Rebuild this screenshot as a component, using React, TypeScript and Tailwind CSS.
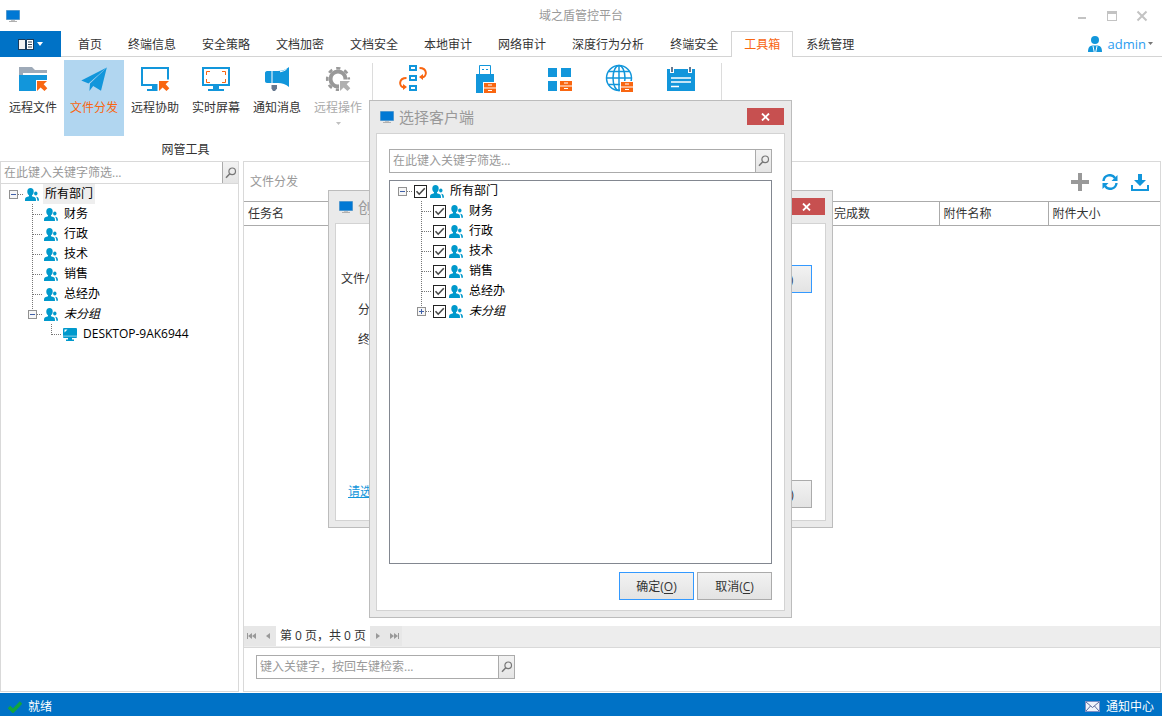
import React, { useState } from 'react';

const TABS = ['首页', '终端信息', '安全策略', '文档加密', '文档安全', '本地审计', '网络审计', '深度行为分析', '终端安全', '工具箱', '系统管理'];
const DEPARTMENTS = ['财务', '行政', '技术', '销售', '总经办'];

const BLUE = '#1296db';
const ORANGE = '#f96611';

/* ---------- icons ---------- */

const MonitorIcon = () => (
  <svg width="14" height="12" viewBox="0 0 14 12" className="shrink-0">
    <rect x="0" y="0" width="14" height="10" fill="#9fb9cc" />
    <rect x="0.5" y="0.5" width="13" height="9" fill="#0078d4" />
    <rect x="5" y="10" width="4" height="1" fill="#c4c4c4" />
    <rect x="3" y="11" width="8" height="1" fill="#b0b0b0" />
  </svg>
);

const GroupIcon = () => (
  <svg width="14" height="13" viewBox="0 0 14 13" className="shrink-0" fill="#0099cc">
    <ellipse cx="5.500" cy="3.700" rx="3.200" ry="3.700" />
    <path d="M4 6.500h3v1.700L9.800 9.200C10.900 9.700 11 10.500 11 13H0C0 10.500.1 9.700 1.200 9.200L4 8.200z" />
    <ellipse cx="10.800" cy="5.500" rx="1.700" ry="2" />
    <path d="M11 8.800C13.200 9 14 10 14 12.700H12.300C12.300 11 12 9.700 11 8.800z" />
  </svg>
);

const ComputerIcon = () => (
  <svg width="14" height="13" viewBox="0 0 14 13" className="shrink-0">
    <rect width="14" height="10" rx="1" fill="#0099cc" />
    <path d="M1.5 4.5V1.5H4.5z" fill="#fff" />
    <rect x="0" y="7.6" width="14" height="1" fill="#8fd0e8" />
    <path d="M5 10h4v1.5h2V13H3v-1.5h2z" fill="#0099cc" />
  </svg>
);

const SearchIcon = () => (
  <svg width="12" height="12" viewBox="0 0 12 12" fill="none" stroke="#777">
    <circle cx="7.2" cy="4.3" r="3.3" strokeWidth="1.2" />
    <path d="M4.8 6.8L1 10.8" strokeWidth="1.5" />
  </svg>
);

const CloseGlyph = () => (
  <svg width="9" height="8" viewBox="0 0 9 8" stroke="#fff" strokeWidth="1.8">
    <path d="M1 .5l7 7M8 .5l-7 7" />
  </svg>
);

const RibbonSvg = ({ children }: { children: React.ReactNode }) => (
  <svg width="32" height="32" viewBox="0 0 32 32" fill="none" className="shrink-0">
    {children}
  </svg>
);

const CornerArrow = ({ fill }: { fill: string }) => (
  <path d="M20 17h10l-3.3 3.3 3.6 3.9-2.8 2.8-3.9-3.6L20 27z" fill={fill} />
);

const Drawer = ({ x, y }: { x: number; y: number }) => (
  <g>
    <rect x={x - 1} y={y - 1} width="14" height="12" fill="#fff" />
    <rect x={x} y={y} width="12" height="4.5" fill={ORANGE} />
    <rect x={x} y={y + 5.5} width="12" height="4.5" fill={ORANGE} />
    <path d={`M${x + 4} ${y + 2}h4M${x + 4} ${y + 7.5}h4`} stroke="#fff" />
  </g>
);

const RemoteFileIcon = () => (
  <RibbonSvg>
    <path d="M2 3h13l3 3h12v4H6v1H2z" fill="#9eaab8" />
    <path d="M6 9h24v2H6z" fill="#fff" />
    <rect x="2" y="11" width="28" height="16" fill={BLUE} />
    <path d="M19 16h12v12H19z" fill="#fff" />
    <CornerArrow fill={ORANGE} />
  </RibbonSvg>
);

const PlaneIcon = () => (
  <RibbonSvg>
    <path d="M28.8 3.5L3.3 16.5l7.2 3z" fill={BLUE} />
    <path d="M28.8 3.5L12 19.6l-.6 7.4 3.8-5 7.8 4.8z" fill={BLUE} />
  </RibbonSvg>
);

const RemoteAssistIcon = () => (
  <RibbonSvg>
    <rect x="3" y="4" width="26" height="17" stroke={BLUE} strokeWidth="2" />
    <path d="M13 22h6v5H8v-2h5z" fill={BLUE} />
    <path d="M18.500 15.500H32V28H18.500z" fill="#fff" />
    <CornerArrow fill={ORANGE} />
  </RibbonSvg>
);

const ScreenIcon = () => (
  <RibbonSvg>
    <rect x="3" y="4" width="26" height="17" stroke={BLUE} strokeWidth="2" />
    <path d="M13 22h6v3h5v2H8v-2h5z" fill={BLUE} />
    <path d="M10 7.500H6.500V11M22 7.500h3.500V11M10 18.500H6.500V15M22 18.500h3.500V15" stroke={ORANGE} />
  </RibbonSvg>
);

const MegaphoneIcon = () => (
  <RibbonSvg>
    <path d="M6 7h4.500v12H6c-1.200 0-2-1-2-2V9c0-1 .8-2 2-2z" fill={BLUE} />
    <path d="M11.500 7H17c4 0 8-1.500 11-4v20c-3-2.500-7-4-11-4h-5.500z" fill={BLUE} />
    <path d="M19 7.800c2.500-.4 4.500-1.200 6.500-2.500" stroke="#fff" />
    <path d="M10.500 21H16v3.500L14 27h-2l-1.500-2.500z" fill="#66788f" />
  </RibbonSvg>
);

const GearIcon = () => (
  <RibbonSvg>
    <circle cx="16" cy="15" r="7.5" stroke="#999" strokeWidth="4" />
    <circle cx="16" cy="15" r="10.8" stroke="#999" strokeWidth="2.600" strokeDasharray="4.240 4.240" strokeDashoffset="2.120" />
    <path d="M17 15.500h14V28H17z" fill="#fff" />
    <path d="M18 17h10l-3.300 3.300 3.600 3.900-2.800 2.800-3.900-3.600L18 27z" fill="#b0b0b0" />
  </RibbonSvg>
);

const FlowIcon = () => (
  <RibbonSvg>
    <path d="M13 2h6v4h-6zM13 12h6v4h-6zM13 22h6v4h-6z" stroke={BLUE} strokeWidth="2" />
    <path d="M22.500 4c8 0 8 8.500 2.500 9.500M9.500 14c-8 0-8 8.500-2.500 9.500" stroke={ORANGE} strokeWidth="2" />
    <path d="M22 13l4-3v6zM10 23l-4-3v6z" fill={ORANGE} />
  </RibbonSvg>
);

const UsbIcon = () => (
  <RibbonSvg>
    <path d="M8.500 10V1.500h11V10" stroke={BLUE} />
    <path d="M11 5.500h2M15 5.500h2" stroke={BLUE} />
    <rect x="5" y="10" width="18" height="19" fill={BLUE} />
    <Drawer x={13} y={19} />
  </RibbonSvg>
);

const AppsIcon = () => (
  <RibbonSvg>
    <path d="M4 4h9v9H4zM17 4h10v9H17zM4 17h9v10H4z" fill={BLUE} />
    <Drawer x={16} y={17} />
  </RibbonSvg>
);

const GlobeIcon = () => (
  <RibbonSvg>
    <g stroke={BLUE} strokeWidth="1.500">
      <circle cx="14" cy="14" r="12.500" />
      <ellipse cx="14" cy="14" rx="6" ry="12.500" />
      <path d="M14 1.500v25M1.500 14h25M3.500 7.500h21M3.500 20.500h21" />
    </g>
    <Drawer x={16} y={18} />
  </RibbonSvg>
);

const NoteIcon = () => (
  <RibbonSvg>
    <rect x="1" y="5" width="28" height="22" fill={BLUE} />
    <path d="M4 3h4v6H4zM22 3h4v6h-4z" fill="#fff" />
    <path d="M5 3h2v5H5zM23 3h2v5h-2z" fill="#66788f" />
    <path d="M5 14h20M5 18h20M5 22.500h8" stroke="#fff" strokeWidth="1.600" />
  </RibbonSvg>
);

/* ---------- shared pieces ---------- */

const SearchBox = ({ label, className }: { label: string; className: string }) => (
  <div className={`flex items-stretch ${className}`}>
    <input
      type="text"
      aria-label={label}
      placeholder={label}
      className="min-w-0 flex-1 bg-white px-[3px] text-xs text-[#333] outline-none placeholder:text-[#999]"
    />
    <button aria-label="搜索" className="flex w-4 items-center justify-center border-l border-[#ababab] bg-linear-to-b from-[#f2f2f2] to-[#e5e5e5]">
      <SearchIcon />
    </button>
  </div>
);

interface ConnectorProps {
  kind: 'root' | 'branch' | 'last';
  expander?: 'open' | 'closed';
}

const Connector: React.FC<ConnectorProps> = ({ kind, expander }) => {
  const drawing = (
    <svg width="21" height="20" viewBox="0 0 21 20" fill="none" shapeRendering="crispEdges">
      {kind !== 'root' && <path d={kind === 'last' ? 'M9.500 0V11' : 'M9.500 0V20'} stroke="#777" strokeDasharray="1 1" />}
      <path d="M10 10.500H20" stroke="#777" strokeDasharray="1 1" />
      {expander && (
        <>
          <rect x="5.500" y="6.500" width="8" height="8" fill="#f6f6f6" stroke="#919191" />
          <path d={expander === 'open' ? 'M7 10.500h5' : 'M7 10.500h5M9.500 8v5'} stroke="#4060a8" />
        </>
      )}
    </svg>
  );
  if (!expander) return <span className="shrink-0">{drawing}</span>;
  return (
    <button aria-label={expander === 'open' ? '折叠' : '展开'} className="shrink-0">
      {drawing}
    </button>
  );
};

const TreeCheck = ({ id }: { id: string }) => {
  const [checked, setChecked] = useState(true);
  return (
    <span className="mr-[3px] grid shrink-0">
      <input
        id={id}
        type="checkbox"
        checked={checked}
        onChange={() => setChecked(!checked)}
        className="size-[13px] appearance-none border border-[#222] bg-white [grid-area:1/1]"
      />
      {checked && (
        <svg width="13" height="13" viewBox="0 0 13 13" fill="none" className="pointer-events-none [grid-area:1/1]">
          <path d="M2.500 6.300L5.200 9.200 10.800 3.200" stroke="#444" strokeWidth="1.600" />
        </svg>
      )}
    </span>
  );
};

interface TreeRowProps extends ConnectorProps {
  label: string;
  level: number;
  checkable?: boolean;
  selected?: boolean;
  italic?: boolean;
  computer?: boolean;
}

const TreeRow: React.FC<TreeRowProps> = ({ label, level, kind, expander, checkable, selected, italic, computer }) => {
  const id = `pick-${label}`;
  const text = `px-0.5 leading-5 ${selected ? 'bg-[#eeeeee]' : ''} ${italic ? 'italic' : ''}`;
  return (
    <li className="flex h-5 items-center text-black" style={{ paddingLeft: level * 19 }}>
      <Connector kind={kind} expander={expander} />
      {checkable && <TreeCheck id={id} />}
      {computer ? <ComputerIcon /> : <GroupIcon />}
      {checkable ? (
        <label htmlFor={id} className={`ml-1 ${text}`}>{label}</label>
      ) : (
        <span className={`ml-1 ${text}`}>{label}</span>
      )}
    </li>
  );
};

const PushButton = ({ text, hotkey, primary }: { text: string; hotkey: string; primary?: boolean }) => (
  <button
    className={`h-7 w-[75px] border bg-linear-to-b from-[#f2f2f2] to-[#e3e3e3] pt-px text-xs text-[#333] ${
      primary ? 'border-[#3399ff]' : 'border-[#ababab]'
    }`}
  >
    {text}(<span className="underline underline-offset-2">{hotkey}</span>)
  </button>
);

interface DialogProps {
  title: string;
  className: string;
  children: React.ReactNode;
}

const Dialog: React.FC<DialogProps> = ({ title, className, children }) => (
  <section role="dialog" aria-label={title} className={`absolute flex flex-col border border-[#bcbcbc] bg-[#eaeaea] px-1.5 pb-1.5 ${className}`}>
    <header className="flex h-8 items-center pl-1">
      <MonitorIcon />
      <h2 className="ml-[5px] flex-1 text-[15px] leading-5 text-[#999]">{title}</h2>
      <button aria-label="关闭" className="mr-px mb-px flex h-[17px] w-[37px] items-center justify-center bg-[#c75050]">
        <CloseGlyph />
      </button>
    </header>
    <div className="flex flex-1 flex-col border border-[#d3d3d3] bg-white px-3">{children}</div>
  </section>
);

/* ---------- window regions ---------- */

const TitleBar = () => (
  <header className="grid h-[31px] grid-cols-[1fr_auto_1fr] items-center px-1.5">
    <MonitorIcon />
    <h1 className="text-xs text-[#999]">域之盾管控平台</h1>
    <div className="flex justify-end gap-[14px] pr-1.5">
      <button aria-label="最小化" className="p-px">
        <svg width="14" height="12" viewBox="0 0 14 12"><path d="M3 7h8v2H3z" fill="#c3c3c3" /></svg>
      </button>
      <button aria-label="最大化" className="p-px">
        <svg width="14" height="12" viewBox="0 0 14 12"><path d="M2 1h10v10H2zM3 4v6h8V4z" fillRule="evenodd" fill="#c3c3c3" /></svg>
      </button>
      <button aria-label="关闭" className="p-px">
        <svg width="14" height="12" viewBox="0 0 14 12"><path d="M2.500 1.500l9 9M11.500 1.500l-9 9" stroke="#c3c3c3" strokeWidth="2" /></svg>
      </button>
    </div>
  </header>
);

const TabBar = () => (
  <nav className="flex h-[26px] items-stretch">
    <button aria-label="应用菜单" className="flex w-[61px] items-center justify-center gap-[3px] bg-[#0072c6]">
      <svg width="16" height="13" viewBox="0 0 16 13">
        <path d="M0 1h7l1 1 1-1h7v11H0z" fill="#1a3b5c" />
        <path d="M1 2h6v9H1z" fill="#f3f3f3" />
        <path d="M9 2h6v9H9z" fill="#fff" />
        <path d="M10 4h4M10 6.500h4M10 9h4" stroke="#345" />
      </svg>
      <svg width="6" height="4" viewBox="0 0 6 4"><path d="M0 0h6L3 4z" fill="#fff" /></svg>
    </button>
    <span className="w-1 border-b border-[#d4d4d4]" />
    {TABS.map((tab) => (
      <button
        key={tab}
        className={`shrink-0 border-[#d4d4d4] text-xs ${
          tab === '工具箱' ? 'border-x border-t px-3 pt-px text-[#f96611]' : 'border-b px-[13px] pt-[3px] text-[#333]'
        }`}
      >
        {tab}
      </button>
    ))}
    <div className="flex flex-1 items-center justify-end border-b border-[#d4d4d4] pr-[9px]">
      <button className="flex items-center text-[13px] leading-5 text-[#2b9cf0]">
        <svg width="14" height="16" viewBox="0 0 14 16" fill={BLUE} className="mr-1.5">
          <circle cx="7" cy="4" r="4" />
          <path d="M0 16c0-4.500 1.500-6 4.500-6.500h5C12.500 10 14 11.500 14 16z" />
          <path d="M5 10l1.200 6M9 10l-1.200 6" stroke="#fff" />
        </svg>
        admin
        <svg width="5" height="3" viewBox="0 0 5 3" className="ml-0.5"><path d="M0 0h5L2.500 3z" fill="#777" /></svg>
      </button>
    </div>
  </nav>
);

interface RibbonButtonProps {
  label: string;
  icon: React.ReactNode;
  active?: boolean;
  disabled?: boolean;
}

const RibbonButton: React.FC<RibbonButtonProps> = ({ label, icon, active, disabled }) => (
  <button
    disabled={disabled}
    className={`flex h-[76px] w-[60px] flex-col items-center pt-1 text-xs ${
      active ? 'bg-[#b1d6f0] text-[#f96611]' : disabled ? 'text-[#aaa]' : 'text-[#333]'
    }`}
  >
    {icon}
    <span className="mt-1 leading-4 whitespace-nowrap">{label}</span>
    {disabled && (
      <svg width="5" height="3" viewBox="0 0 5 3" className="mt-1.5"><path d="M0 0h5L2.500 3z" fill="#c0c0c0" /></svg>
    )}
  </button>
);

const IconButton = ({ name, icon, wide }: { name: string; icon: React.ReactNode; wide?: boolean }) => (
  <button aria-label={name} className={`flex h-[76px] justify-center pt-1 ${wide ? 'w-[74px]' : 'w-[60px]'}`}>
    {icon}
  </button>
);

const Ribbon = () => (
  <div className="flex h-[104px] items-start pt-[3px]">
    <div className="flex flex-col pl-[3px]">
      <div className="flex gap-px">
        <RibbonButton label="远程文件" icon={<RemoteFileIcon />} />
        <RibbonButton label="文件分发" icon={<PlaneIcon />} active />
        <RibbonButton label="远程协助" icon={<RemoteAssistIcon />} />
        <RibbonButton label="实时屏幕" icon={<ScreenIcon />} />
        <RibbonButton label="通知消息" icon={<MegaphoneIcon />} />
        <RibbonButton label="远程操作" icon={<GearIcon />} disabled />
      </div>
      <span className="mt-1 text-center text-xs leading-5 text-[#333]">网管工具</span>
    </div>
    <span className="mt-[3px] mr-[3px] ml-1 h-[92px] w-px bg-[#dcdcdc]" />
    <div className="flex">
      <IconButton name="流程" icon={<FlowIcon />} wide />
      <IconButton name="移动存储" icon={<UsbIcon />} wide />
    </div>
    <div className="ml-1.5 flex gap-px">
      <IconButton name="软件" icon={<AppsIcon />} />
      <IconButton name="网络" icon={<GlobeIcon />} />
      <IconButton name="记录" icon={<NoteIcon />} />
    </div>
    <span className="mt-[3px] ml-[9px] h-[92px] w-px bg-[#dcdcdc]" />
  </div>
);

const Sidebar = () => (
  <aside className="w-[239px] shrink-0 border border-[#d9d9d9]">
    <SearchBox label="在此键入关键字筛选..." className="h-[22px] border-b border-[#d9d9d9]" />
    <ul className="pl-[3px] text-xs">
      <TreeRow label="所有部门" level={0} kind="root" expander="open" selected />
      {DEPARTMENTS.map((name) => (
        <TreeRow key={name} label={name} level={1} kind="branch" />
      ))}
      <TreeRow label="未分组" level={1} kind="last" expander="open" italic />
      <TreeRow label="DESKTOP-9AK6944" level={2} kind="last" computer />
    </ul>
  </aside>
);

const PagerButton = ({ name, d }: { name: string; d: string }) => (
  <button aria-label={name} className="flex h-5 w-4 items-center justify-center bg-[#e7e7e7]">
    <svg width="10" height="8" viewBox="0 0 10 8" fill="#999"><path d={d} /></svg>
  </button>
);

const TaskPanel = () => (
  <main className="mr-px flex min-w-0 flex-1 flex-col border border-[#d9d9d9] text-xs text-[#333]">
    <div className="flex h-[39px] items-center pr-[11px] pl-1.5">
      <h2 className="flex-1 text-[#999]">文件分发</h2>
      <div className="flex items-center gap-3">
        <button aria-label="新建">
          <svg width="18" height="18" viewBox="0 0 18 18"><path d="M7 0h4v7h7v4h-7v7H7v-7H0V7h7z" fill="#999" /></svg>
        </button>
        <button aria-label="刷新" className="mx-px">
          <svg width="16" height="16" viewBox="0 0 16 16" fill="none" stroke={BLUE} strokeWidth="2.400">
            <path d="M1.500 7A6.300 6.300 0 0 1 13 4M14.500 9A6.300 6.300 0 0 1 3 12" />
            <path d="M15.500 1v6h-6zM.5 15V9h6z" fill={BLUE} stroke="none" />
          </svg>
        </button>
        <button aria-label="下载">
          <svg width="18" height="18" viewBox="0 0 18 18" fill={BLUE}>
            <path d="M7 1h4v6h4l-6 6-6-6h4z" />
            <path d="M0 12h2v4h14v-4h2v6H0z" />
          </svg>
        </button>
      </div>
    </div>
    <table className="w-full table-fixed border-collapse">
      <thead>
        <tr className="h-6 border-y border-[#ababab] text-left">
          <th className="pl-1 font-normal">任务名</th>
          <th className="w-[109px] border-r border-[#ababab] pl-1 font-normal">完成数</th>
          <th className="w-[109px] border-r border-[#ababab] pl-1 font-normal">附件名称</th>
          <th className="w-28 pl-1 font-normal">附件大小</th>
        </tr>
      </thead>
      <tbody />
    </table>
    <div className="flex-1" />
    <div className="flex h-[22px] items-start border-b border-[#d9d9d9] bg-[#ededed]">
      <PagerButton name="第一页" d="M0 1h1v6H0zM5 1v6L1 4zM9 1v6L5 4z" />
      <PagerButton name="上一页" d="M7 1v6L3 4z" />
      <span className="h-5 min-w-[94px] bg-white text-center leading-5 whitespace-nowrap">第 0 页，共 0 页</span>
      <PagerButton name="下一页" d="M3 1v6l4-3z" />
      <PagerButton name="最后一页" d="M9 1h1v6H9zM1 1v6l4-3zM5 1v6l4-3z" />
    </div>
    <div className="h-[43px] px-3 pt-[7px]">
      <SearchBox label="键入关键字，按回车键检索..." className="h-6 w-[259px] border border-[#ababab]" />
    </div>
  </main>
);

const StatusBar = () => (
  <footer className="flex h-[23px] items-center bg-[#0072c6] px-2 pt-1 text-xs text-white">
    <svg width="14" height="12" viewBox="0 0 14 12" className="mr-1.5"><path d="M1 6l4 4 8-8.500" fill="none" stroke="#12a53c" strokeWidth="3.500" /></svg>
    就绪
    <button className="ml-auto flex items-center">
      <svg width="15" height="11" viewBox="0 0 15 11" className="mr-1.5">
        <rect x=".5" y=".5" width="14" height="10" fill="#f1f3fa" stroke="#7d8fc4" />
        <path d="M1 1l6.500 5.500L14 1M1 10l4.500-5M14 10L9.500 5" fill="none" stroke="#5c6b9c" />
      </svg>
      通知中心
    </button>
  </footer>
);

const CreateTaskDialog = () => (
  <Dialog title="创建" className="top-[190px] left-[328px] h-[338px] w-[505px]">
    <div className="mt-[41px] mr-px -ml-[7px] flex h-7 items-center justify-between text-xs text-[#333]">
      <span>文件/</span>
      <PushButton text="选择" hotkey="S" primary />
    </div>
    <div className="mt-[7px] flex flex-col gap-2.5 pl-2.5 text-xs leading-5 text-[#333]">
      <span>分</span>
      <span>终</span>
    </div>
    <div className="mt-auto mr-px mb-3 flex h-7 items-center justify-between text-xs">
      <a href="#clients" className="pb-1 text-[#1296db] underline">请选</a>
      <PushButton text="取消" hotkey="C" />
    </div>
  </Dialog>
);

const ClientDialog = () => (
  <Dialog title="选择客户端" className="top-[100px] left-[369px] h-[518px] w-[423px]">
    <SearchBox label="在此键入关键字筛选..." className="mt-[15px] h-6 border border-[#ababab]" />
    <ul className="mt-[7px] flex-1 border border-[#828790] pl-[3px] text-xs">
      <TreeRow label="所有部门" level={0} kind="root" expander="open" checkable />
      {DEPARTMENTS.map((name) => (
        <TreeRow key={name} label={name} level={1} kind="branch" checkable />
      ))}
      <TreeRow label="未分组" level={1} kind="last" expander="closed" italic checkable />
    </ul>
    <div className="mt-2 mb-2.5 flex justify-end gap-[3px]">
      <PushButton text="确定" hotkey="O" primary />
      <PushButton text="取消" hotkey="C" />
    </div>
  </Dialog>
);

export default function App() {
  return (
    <div className="relative flex min-h-screen flex-col bg-white font-['Open_Sans','Noto_Sans_CJK_SC',sans-serif]">
      <TitleBar />
      <TabBar />
      <Ribbon />
      <div className="mb-px flex flex-1 gap-1">
        <Sidebar />
        <TaskPanel />
      </div>
      <StatusBar />
      <CreateTaskDialog />
      <ClientDialog />
    </div>
  );
}
